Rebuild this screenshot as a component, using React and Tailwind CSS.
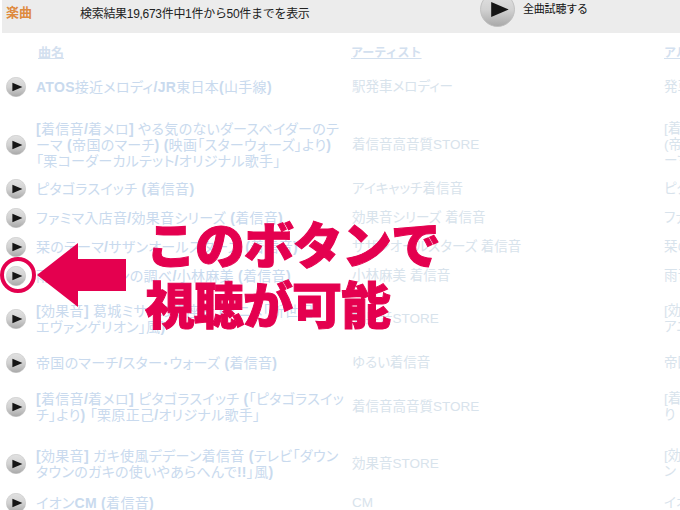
const jp = { fontFamily: '"Liberation Sans", "Noto Sans CJK JP", sans-serif' };

const rows = [
  { h: "h-[59px]", title: ["ATOS接近メロディ/JR東日本(山手線)"], artist: "駅発車メロディー", album: ["発車メロディ"] },
  { h: "h-[58px]", title: ["[着信音/着メロ] やる気のないダースベイダーのテ", "ーマ (帝国のマーチ) (映画「スターウォーズ」より)", "「栗コーダーカルテット/オリジナル歌手」"], artist: "着信音高音質STORE", album: ["[着信音", "(帝国の", "ーマ"] },
  { h: "h-[29px]", title: ["ピタゴラスイッチ (着信音)"], artist: "アイキャッチ着信音", album: ["ピタゴラ"] },
  { h: "h-[29px]", title: ["ファミマ入店音/効果音シリーズ (着信音)"], artist: "効果音シリーズ 着信音", album: ["ファミマ"] },
  { h: "h-[29px]", title: ["栞のテーマ/サザンオールスターズ (着信音)"], artist: "サザンオールスターズ 着信音", album: ["栞のテ"] },
  { h: "h-[29px]", title: ["雨音はショパンの調べ/小林麻美 (着信音)"], artist: "小林麻美 着信音", album: ["雨音は"] },
  { h: "h-[58px]", title: ["[効果音] 葛城ミサトの講座音 (アニメ「新世紀", "エヴァンゲリオン」風)"], artist: "効果音STORE", album: ["[効果音", "アニメ"] },
  { h: "h-[30px]", title: ["帝国のマーチ/スター・ウォーズ (着信音)"], artist: "ゆるい着信音", album: ["帝国の"] },
  { h: "h-[57px]", title: ["[着信音/着メロ] ピタゴラスイッチ (「ピタゴラスイッ", "チ」より) 「栗原正己/オリジナル歌手」"], artist: "着信音高音質STORE", album: ["[着信音", "り"] },
  { h: "h-[58px]", title: ["[効果音] ガキ使風デデーン着信音 (テレビ「ダウン", "タウンのガキの使いやあらへんで!!」風)"], artist: "効果音STORE", album: ["[効果音", "ン"] },
  { h: "h-[20px]", title: ["イオンCM (着信音)"], artist: "CM", album: ["イオン"] },
];

// latin runs are bold in the titles, the kanji/kana are not
function Title({ text }) {
  return text.split(/([\x20-\x7e]+)/).map((part, i) =>
    i % 2 ? <b key={i} className="font-bold">{part}</b> : <span key={i}>{part}</span>
  );
}

function PlayButton({ size = 20, id }) {
  return (
    <svg width={size} height={size} viewBox="0 0 20 20" className="shrink-0">
      <defs>
        <linearGradient id={id} x1="0" y1="0" x2="0" y2="1">
          <stop offset="0" stopColor="#e2e2e2" />
          <stop offset="0.5" stopColor="#d2d2d2" />
          <stop offset="1" stopColor="#a8a8a8" />
        </linearGradient>
      </defs>
      <circle cx="10" cy="10" r="9.7" fill={`url(#${id})`} stroke="#bdbdbd" strokeWidth="0.5" />
      <path d="M6.4 5.7 L16.4 10 L6.4 14.3 Z" fill="#151515" />
    </svg>
  );
}

export default function App() {
  return (
    <div style={jp} className="relative w-[680px] h-[510px] overflow-hidden bg-white">
      {/* header bar */}
      <div className="ml-[2px] h-[33px] bg-[#ececec] flex items-start relative">
        <span className="w-[78px] pl-[4px] pt-[5px] text-[13px] leading-[16px] font-bold text-[#de8a3e]">楽曲</span>
        <span className="w-[400px] pt-[6px] text-[12px] leading-[16px] tracking-[-0.3px] text-[#222]">検索結果19,673件中1件から50件までを表示</span>
        <div className="absolute left-[478px] top-[-8px] flex items-center">
          <PlayButton size={35} id="play-all" />
          <span className="ml-[8px] mt-[-1px] text-[11px] leading-[14px] tracking-[-0.2px] text-[#111]">全曲試聴する</span>
        </div>
      </div>

      {/* column heads */}
      <div className="grid grid-cols-[36px_315px_313px_100px] w-[764px] h-[28px] items-end text-[13px] leading-[16px] font-bold text-[#d3e0ef] underline">
        <span />
        <span className="pl-[2px]">曲名</span>
        <span className="text-[12px]">アーティスト</span>
        <span className="text-[12px]">アルバム</span>
      </div>

      {/* rows */}
      <div className="w-[800px] -mt-[4px] [font-feature-settings:'palt']">
        {rows.map((r, i) => (
          <div key={i} className={`grid grid-cols-[36px_316px_312px_136px] items-center ${r.h}`}>
            <div className="pl-[6px] flex">
              <PlayButton id={`play-${i}`} />
            </div>
            <div className="text-[14px] leading-[16px] tracking-[0.3px] text-[#c9daee] whitespace-nowrap">
              {r.title.map((t) => (
                <div key={t}>
                  <Title text={t} />
                </div>
              ))}
            </div>
            <div className="text-[13.5px] leading-[16px] text-[#d8e3ec] whitespace-nowrap">{r.artist}</div>
            <div className="text-[13.5px] leading-[16px] text-[#d8e3ec] whitespace-nowrap">
              {r.album.map((t) => (
                <div key={t}>{t}</div>
              ))}
            </div>
          </div>
        ))}
      </div>

      {/* annotation drawn over the table */}
      <svg width="680" height="510" className="absolute left-0 top-0 pointer-events-none">
        <circle cx="18" cy="275" r="16" fill="none" stroke="#e4004f" strokeWidth="4" />
        <path d="M37 275 L78 243 L78 259 L126 259 L126 291 L78 291 L78 307 Z" fill="#e4004f" />
      </svg>
      <div className="absolute left-[146px] top-[217px] text-[50px] leading-[60px] font-black text-[#e4004f] whitespace-nowrap tracking-[-1px] [-webkit-text-stroke:1px_#e4004f]">
        <div>このボタンで</div>
        <div className="-ml-[1px]">視聴が可能</div>
      </div>
    </div>
  );
}
